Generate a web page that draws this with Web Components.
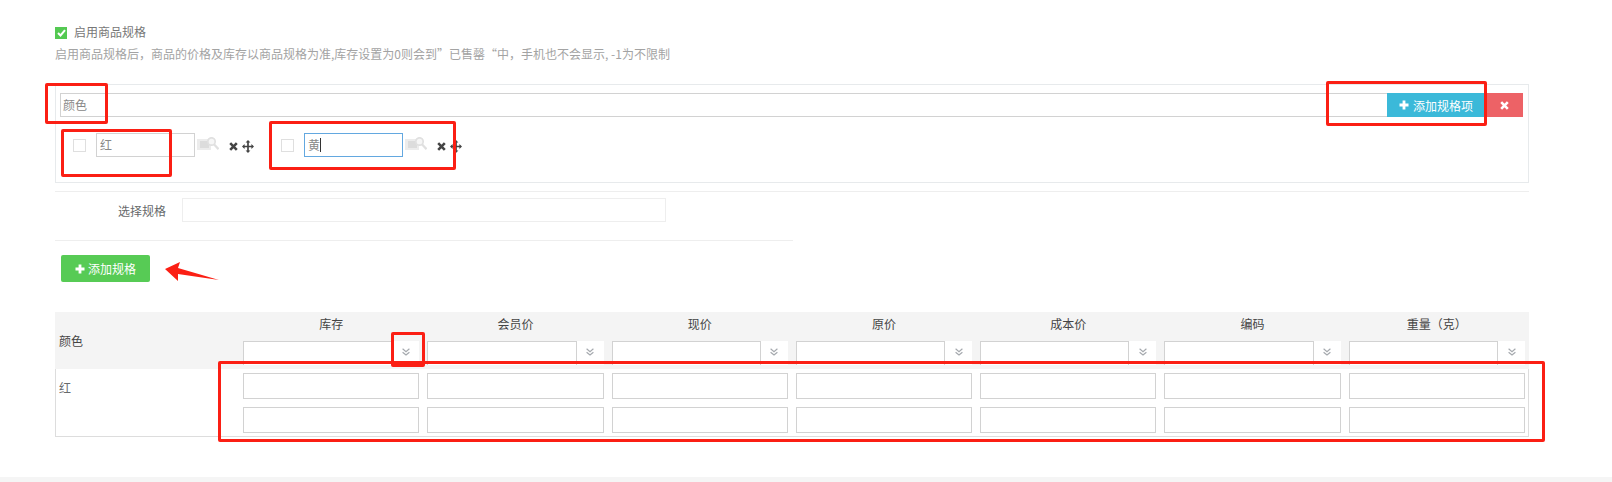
<!DOCTYPE html>
<html lang="zh">
<head>
<meta charset="utf-8">
<title>商品规格</title>
<style>
  html, body { margin: 0; background: #fff; }
  body { font: 12px/17px "Noto Sans CJK SC", "Liberation Sans", sans-serif; color: #676a6c; }
  .fw { font-variant-east-asian: full-width; }
</style>
</head>
<body>

<spec-page>
  <spec-enable label="启用商品规格">启用商品规格后，商品的价格及库存以商品规格为准,库存设置为0则会到<span class="fw">”</span>已售罄<span class="fw">“</span>中，手机也不会显示, -1为不限制</spec-enable>

  <spec-group name="颜色">
    <spec-item>红</spec-item>
    <spec-item focused>黄</spec-item>
  </spec-group>

  <spec-select label="选择规格"></spec-select>

  <add-button>添加规格</add-button>

  <price-table>
    <price-head slot="head" label="颜色" titles="库存,会员价,现价,原价,成本价,编码,重量（克）"></price-head>
    <price-row label="红" columns="7" rows="2"></price-row>
  </price-table>

  <red-box x="45" y="83" w="63" h="41"></red-box>
  <red-box x="61" y="129" w="111" h="48"></red-box>
  <red-box x="269" y="121" w="187" h="49"></red-box>
  <red-box x="1326" y="81" w="161" h="45"></red-box>
  <red-box x="391" y="332" w="34" h="35"></red-box>
  <red-box x="218" y="361" w="1327" h="81"></red-box>
  <red-arrow></red-arrow>
</spec-page>

<script>
// 图标
const ICONS = {
  plus: '<svg width="10" height="10" viewBox="0 0 10 10"><path d="M5 .5v9M.5 5h9" stroke="currentColor" stroke-width="2.8" fill="none"/></svg>',
  times: '<svg width="9" height="9" viewBox="0 0 9 9"><path d="M1.2 1.2l6.6 6.6M7.8 1.2L1.2 7.8" stroke="currentColor" stroke-width="2.6" fill="none"/></svg>',
  move: '<svg width="12" height="13" viewBox="0 0 12 13"><path d="M6 1.5v10M1.5 6.5h9" stroke="currentColor" stroke-width="1.7" fill="none"/><path d="M6 0l2.4 2.6H3.6zM6 13l2.4-2.6H3.6zM0 6.5l2.6-2.4v4.8zM12 6.5l-2.6-2.4v4.8z" fill="currentColor"/></svg>',
  picture: '<svg width="22" height="14" viewBox="0 0 22 14"><rect x="0" y="2" width="14" height="11" fill="#ececec"/><rect x="3" y="4" width="9" height="7" fill="#dcdcdc"/><circle cx="14.5" cy="4.5" r="3.7" fill="#f6f6f6" stroke="#e0e0e0" stroke-width="1.7"/><path d="M17 7.2l4.5 5" stroke="#e0e0e0" stroke-width="2.2" fill="none"/></svg>',
  doubleDown: '<svg width="8" height="8" viewBox="0 0 8 8"><path d="M.6.8L4 3.6 7.4.8M.6 4.2L4 7l3.4-2.8" stroke="#a5a9ae" stroke-width="1.2" fill="none"/></svg>'
};

class BaseElement extends HTMLElement {
  connectedCallback() {
    if (!this.shadowRoot) this.attachShadow({ mode: 'open' });
    this.render();
  }
}

class SpecPage extends BaseElement {
  render() {
    this.shadowRoot.innerHTML = `
      <style>
        :host { display: block; position: relative; width: 1612px; height: 482px; overflow: hidden; box-sizing: border-box; padding: 26px 83px 0 55px; }
      </style>
      <slot></slot>
    `;
  }
}

class SpecEnable extends BaseElement {
  render() {
    this.shadowRoot.innerHTML = `
      <style>
        :host { display: block; }
        .row { display: flex; align-items: center; gap: 7px; height: 13px; color: #777; }
        .row span:last-child { margin-top: -2px; }
        .check { width: 12px; height: 12px; background: #54c952; display: flex; align-items: center; justify-content: center; }
        .help { margin-top: 6px; height: 17px; line-height: 17px; color: #a3a3a3; white-space: nowrap; }
      </style>
      <div class="row">
        <span class="check"><svg width="9" height="8" viewBox="0 0 9 8"><path d="M1 4l2.5 2.5L8 1.2" stroke="#fff" stroke-width="2" fill="none"/></svg></span>
        <span>${this.getAttribute('label')}</span>
      </div>
      <div class="help"><slot></slot></div>
    `;
  }
}

class SpecGroup extends BaseElement {
  render() {
    this.shadowRoot.innerHTML = `
      <style>
        :host { display: block; box-sizing: border-box; margin-top: 22px; height: 99px; border: 1px solid #e7eaec; padding: 8px 5px 0 4px; }
        .head { display: flex; height: 24px; }
        .name { flex: 1; box-sizing: border-box; border: 1px solid #d2d2d2; border-right: 0; padding: 0 2px; line-height: 22px; color: #888; }
        button { border: 0; padding: 0; margin: 0; color: #fff; font: inherit; display: flex; align-items: center; justify-content: center; gap: 4px; }
        .add { width: 98px; background: #3bb9d9; }
        .del { width: 38px; background: #ed6266; }
        .items { display: flex; margin-top: 16px; padding-left: 13px; gap: 0; }
      </style>
      <div class="head">
        <div class="name">${this.getAttribute('name')}</div>
        <button class="add">${ICONS.plus}<span>添加规格项</span></button>
        <button class="del">${ICONS.times}</button>
      </div>
      <div class="items"><slot></slot></div>
    `;
  }
}

class SpecItem extends BaseElement {
  render() {
    const focused = this.hasAttribute('focused');
    this.shadowRoot.innerHTML = `
      <style>
        :host { display: flex; align-items: center; width: 208px; height: 24px; }
        .box { width: 13px; height: 13px; box-sizing: border-box; border: 1px solid #dfdfdf; margin-right: 10px; }
        .input { width: 99px; height: 24px; box-sizing: border-box; border: 1px solid ${focused ? '#63a8e0' : '#d2d2d2'}; padding: 0 3px; line-height: 22px; color: #888; display: flex; align-items: center; }
        .caret { width: 1px; height: 14px; background: #333; }
        .pic { display: flex; margin-left: 2px; margin-top: -3px; }
        .del { display: flex; color: #444; margin-left: 10px; margin-top: 2px; }
        .move { display: flex; color: #444; margin-left: 4px; margin-top: 2px; }
      </style>
      <span class="box"></span>
      <div class="input"><slot></slot>${focused ? '<span class="caret"></span>' : ''}</div>
      <span class="pic">${ICONS.picture}</span>
      <span class="del">${ICONS.times}</span>
      <span class="move">${ICONS.move}</span>
    `;
  }
}

class SpecSelect extends BaseElement {
  render() {
    this.shadowRoot.innerHTML = `
      <style>
        :host { display: block; margin-top: 8px; border-top: 1px solid #eee; }
        .row { display: flex; align-items: center; margin-top: 6px; height: 24px; }
        label { width: 111px; text-align: right; margin-right: 16px; color: #676a6c; }
        .input { width: 484px; height: 24px; box-sizing: border-box; border: 1px solid #eee; }
        hr { width: 738px; height: 1px; border: 0; margin: 18px 0 0; background: #eee; }
      </style>
      <div class="row"><label>${this.getAttribute('label')}</label><div class="input"></div></div>
      <hr>
    `;
  }
}

class AddButton extends BaseElement {
  render() {
    this.shadowRoot.innerHTML = `
      <style>
        :host { display: flex; align-items: center; justify-content: center; gap: 3px; box-sizing: border-box; width: 89px; height: 27px; margin: 14px 0 0 6px; background: #57cb55; color: #fff; border-radius: 2px; }
        span { display: flex; }
      </style>
      <span>${ICONS.plus}</span><slot></slot>
    `;
  }
}

class PriceTable extends BaseElement {
  render() {
    this.shadowRoot.innerHTML = `
      <style>
        :host { display: block; margin-top: 30px; }
        footer { position: absolute; left: 0; right: 0; top: 477px; height: 5px; background: #f5f5f5; }
      </style>
      <slot name="head"></slot>
      <slot></slot>
      <footer></footer>
    `;
  }
}

class PriceHead extends BaseElement {
  render() {
    const titles = this.getAttribute('titles').split(',');
    const cells = titles.map(t => `
      <div class="cell">
        <div class="title">${t}</div>
        <div class="group"><div class="input"></div><div class="addon">${ICONS.doubleDown}</div></div>
      </div>`).join('');
    this.shadowRoot.innerHTML = `
      <style>
        :host { display: grid; grid-template-columns: 180px repeat(7, 1fr); column-gap: 8px; padding-right: 4px; box-sizing: border-box; height: 57px; background: #f4f4f4; color: #444; }
        .label { padding-left: 4px; align-self: center; margin-top: -1px; }
        .title { text-align: center; height: 29px; line-height: 24px; }
        .group { display: flex; height: 24px; background: #fff; }
        .input { flex: 1; box-sizing: border-box; border: 1px solid #d2d2d2; border-bottom: 0; }
        .addon { width: 27px; display: flex; align-items: center; justify-content: center; padding-bottom: 2px; box-sizing: border-box; }
      </style>
      <div class="label">${this.getAttribute('label')}</div>
      ${cells}
    `;
  }
}

class PriceRow extends BaseElement {
  render() {
    const cols = +this.getAttribute('columns');
    const rows = +this.getAttribute('rows');
    const inputs = '<div class="input"></div>'.repeat(cols * rows);
    this.shadowRoot.innerHTML = `
      <style>
        :host { display: grid; grid-template-columns: 179px repeat(7, 1fr); column-gap: 8px; box-sizing: border-box; height: 68px; border: 1px solid #ddd; border-top: 0; padding: 4px 3px 3px 0; row-gap: 8px; grid-auto-rows: 26px; }
        .label { grid-row: span ${rows}; grid-column: 1; padding-left: 3px; margin-top: 6px; color: #676a6c; }
        .input { box-sizing: border-box; border: 1px solid #d2d2d2; }
      </style>
      <div class="label">${this.getAttribute('label')}</div>
      ${inputs}
    `;
  }
}

// 截图上的红色标注
class RedBox extends BaseElement {
  render() {
    const a = n => this.getAttribute(n) + 'px';
    this.shadowRoot.innerHTML = `
      <style>
        :host { position: absolute; left: ${a('x')}; top: ${a('y')}; width: ${a('w')}; height: ${a('h')}; box-sizing: border-box; border: 3px solid #fb1f14; border-radius: 2px; }
      </style>
    `;
  }
}

class RedArrow extends BaseElement {
  render() {
    this.shadowRoot.innerHTML = `
      <style>
        :host { position: absolute; left: 160px; top: 258px; display: block; width: 64px; height: 28px; }
      </style>
      <svg width="64" height="28" viewBox="160 258 64 28"><polygon points="165,269 180,262 178,268 219,280 178,274 178,281" fill="#fb1f14"/></svg>
    `;
  }
}

customElements.define('spec-page', SpecPage);
customElements.define('spec-enable', SpecEnable);
customElements.define('spec-group', SpecGroup);
customElements.define('spec-item', SpecItem);
customElements.define('spec-select', SpecSelect);
customElements.define('add-button', AddButton);
customElements.define('price-table', PriceTable);
customElements.define('price-head', PriceHead);
customElements.define('price-row', PriceRow);
customElements.define('red-box', RedBox);
customElements.define('red-arrow', RedArrow);
</script>
</body>
</html>
